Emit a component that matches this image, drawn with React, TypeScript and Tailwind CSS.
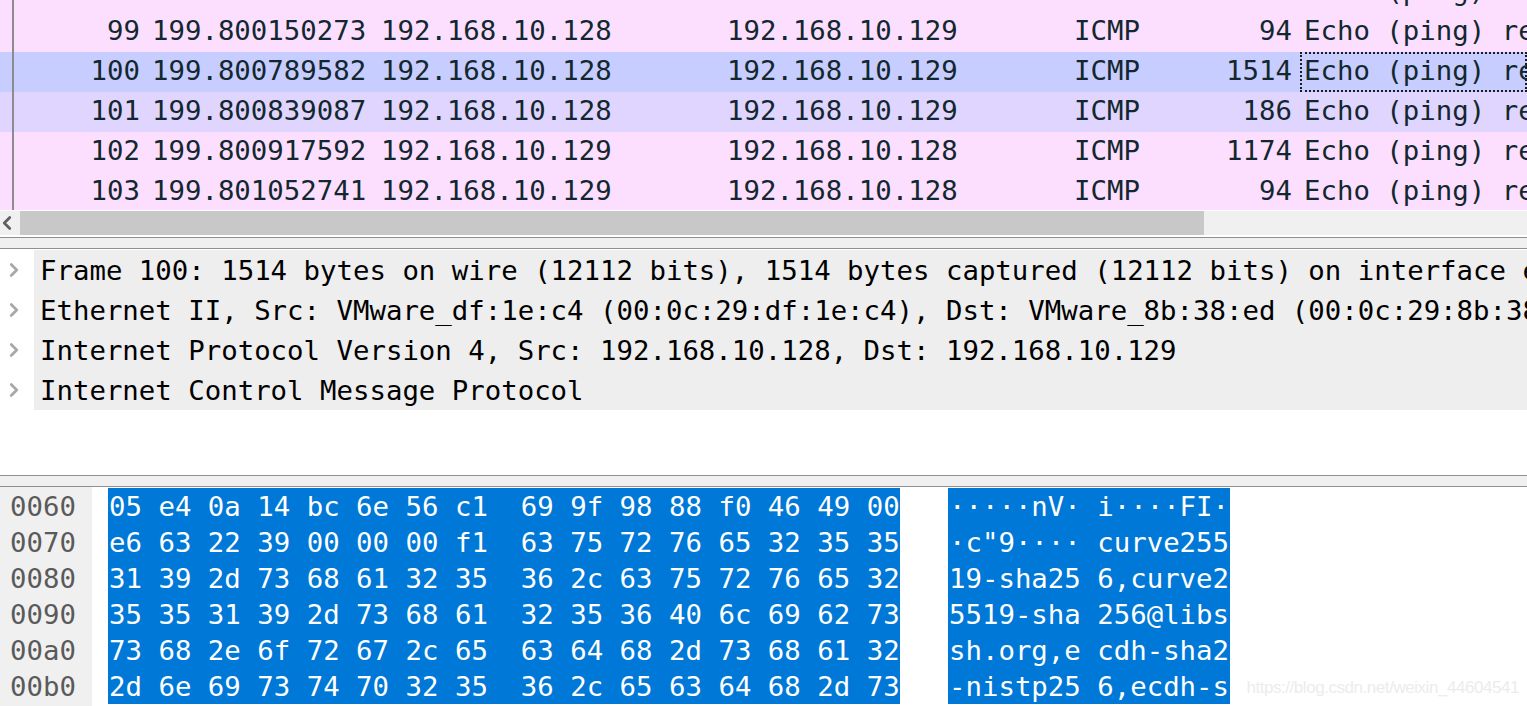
import React from 'react';
import { ChevronRight, ChevronLeft } from 'lucide-react';

interface Packet {
  no: string;
  time: string;
  src: string;
  dst: string;
  proto: string;
  len: string;
  bg: string;
  selected?: boolean;
}

const packets: Packet[] = [
  { no: '', time: '', src: '', dst: '', proto: '', len: '', bg: 'bg-[#fcdfff]' },
  { no: '99', time: '199.800150273', src: '192.168.10.128', dst: '192.168.10.129', proto: 'ICMP', len: '94', bg: 'bg-[#fcdfff]' },
  { no: '100', time: '199.800789582', src: '192.168.10.128', dst: '192.168.10.129', proto: 'ICMP', len: '1514', bg: 'bg-[#c7cdff]', selected: true },
  { no: '101', time: '199.800839087', src: '192.168.10.128', dst: '192.168.10.129', proto: 'ICMP', len: '186', bg: 'bg-[#e0d5ff]' },
  { no: '102', time: '199.800917592', src: '192.168.10.129', dst: '192.168.10.128', proto: 'ICMP', len: '1174', bg: 'bg-[#fcdfff]' },
  { no: '103', time: '199.801052741', src: '192.168.10.129', dst: '192.168.10.128', proto: 'ICMP', len: '94', bg: 'bg-[#fcdfff]' },
];

const details = [
  'Frame 100: 1514 bytes on wire (12112 bits), 1514 bytes captured (12112 bits) on interface eth0',
  'Ethernet II, Src: VMware_df:1e:c4 (00:0c:29:df:1e:c4), Dst: VMware_8b:38:ed (00:0c:29:8b:38:ed)',
  'Internet Protocol Version 4, Src: 192.168.10.128, Dst: 192.168.10.129',
  'Internet Control Message Protocol',
];

const hexRows = [
  ['0060', '05 e4 0a 14 bc 6e 56 c1  69 9f 98 88 f0 46 49 00', '·····nV· i····FI·'],
  ['0070', 'e6 63 22 39 00 00 00 f1  63 75 72 76 65 32 35 35', '·c"9···· curve255'],
  ['0080', '31 39 2d 73 68 61 32 35  36 2c 63 75 72 76 65 32', '19-sha25 6,curve2'],
  ['0090', '35 35 31 39 2d 73 68 61  32 35 36 40 6c 69 62 73', '5519-sha 256@libs'],
  ['00a0', '73 68 2e 6f 72 67 2c 65  63 64 68 2d 73 68 61 32', 'sh.org,e cdh-sha2'],
  ['00b0', '2d 6e 69 73 74 70 32 35  36 2c 65 63 64 68 2d 73', '-nistp25 6,ecdh-s'],
];

const Divider = () => (
  <div className="h-[12px] shrink-0 bg-[#f0f0f0] border-y border-[#8f8f94]" />
);

export default function App() {
  return (
    <div className="h-[706px] w-[1527px] overflow-hidden flex flex-col bg-white font-['DejaVu_Sans_Mono',monospace] text-[27.36px] leading-[40px]">
      {/* packet list */}
      <div className="relative h-[210px] shrink-0 overflow-hidden text-[#12272e]">
        <div className="-mt-[28px] leading-[38px]">
          {packets.map((p, i) => (
            <div
              key={i}
              className={`h-[40px] grid grid-cols-[152px_229px_346px_347px_152px_66px_1fr] whitespace-pre overflow-hidden ${p.bg}`}
            >
              <span className="text-right pr-[12px]">{p.no}</span>
              <span>{p.time}</span>
              <span>{p.src}</span>
              <span>{p.dst}</span>
              <span>{p.proto}</span>
              <span className="text-right">{p.len}</span>
              <span className={`ml-[8px] pl-[4px] overflow-hidden ${p.selected ? 'outline-2 -outline-offset-2 outline-dotted outline-[#1a1a1a]' : ''}`}>
                Echo (ping) request
              </span>
            </div>
          ))}
        </div>
        <div className="absolute left-[12px] top-0 bottom-0 w-[2px] bg-[#8c8c90]" />
      </div>

      {/* packet list scrollbar */}
      <div className="h-[24px] shrink-0 flex bg-[#f0f0f0] mt-[1px] mb-[2px]">
        <div className="w-[20px] flex items-center">
          <ChevronLeft size={22} strokeWidth={3} className="shrink-0 -ml-[4px] text-[#606060]" />
        </div>
        <div className="w-[1184px] bg-[#c8c8c8]" />
      </div>

      <Divider />

      {/* packet details */}
      <div className="h-[226px] shrink-0 overflow-hidden text-black pt-[1px] leading-[42px]">
        {details.map((d) => (
          <div key={d} className="h-[40px] flex whitespace-pre">
            <div className="w-[34px] shrink-0 flex items-center justify-center -translate-x-[3px]">
              <ChevronRight size={22} strokeWidth={3} className="text-[#a8a8a8]" />
            </div>
            <div className="flex-1 min-w-0 bg-[#eeeeee] pl-[6px] overflow-hidden">{d}</div>
          </div>
        ))}
      </div>

      <Divider />

      {/* packet bytes */}
      <div className="relative flex-1 min-h-0 flex overflow-hidden leading-[38px]">
        <div className="w-[92px] shrink-0 bg-[#f0f0f0] pt-[1px] pl-[10px] text-[#5a5a5a]">
          {hexRows.map((r) => (
            <div key={r[0]} className="h-[36px]">{r[0]}</div>
          ))}
        </div>
        <div className="ml-[16px] w-[792px] shrink-0 pt-[1px]">
          <div className="bg-[#0078d7] text-white pl-[1px] whitespace-pre">
            {hexRows.map((r) => (
              <div key={r[0]} className="h-[36px]">{r[1]}</div>
            ))}
          </div>
        </div>
        <div className="ml-[48px] w-[282px] shrink-0 pt-[1px]">
          <div className="bg-[#0078d7] text-white pl-[1px] whitespace-pre">
            {hexRows.map((r) => (
              <div key={r[0]} className="h-[36px]">{r[2]}</div>
            ))}
          </div>
        </div>
        <span className="absolute right-[8px] bottom-[7px] font-['Liberation_Sans',sans-serif] text-[17px] tracking-[-0.45px] leading-[22px] text-[#ececec]">
          https://blog.csdn.net/weixin_44604541
        </span>
      </div>
    </div>
  );
}
